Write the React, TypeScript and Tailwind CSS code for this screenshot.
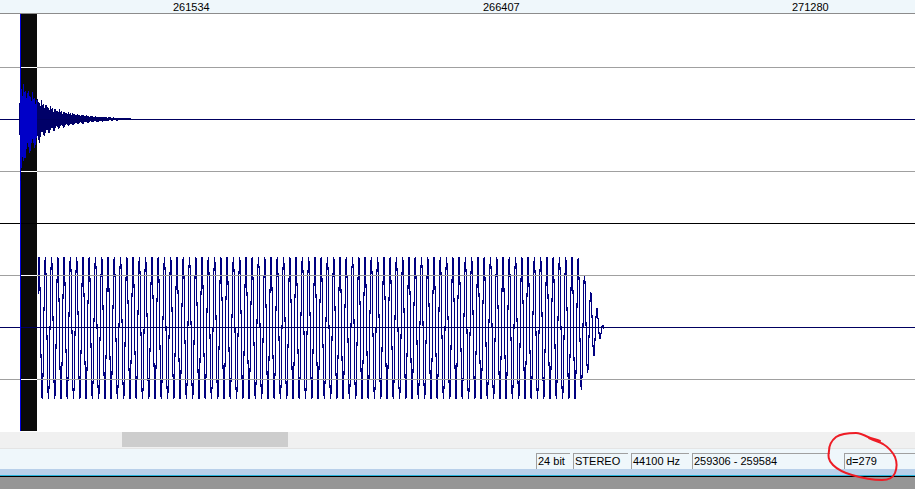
const P = 6.27;

function buildLower() {
  let d = "";
  const y = (x: number) => {
    const env = x < 578 ? 1 : Math.max(0, (604 - x) / 26);
    return 327.5 - 70.5 * env * Math.cos((2 * Math.PI * (x - 39)) / P);
  };
  for (let x = 38; x < 604; x++) {
    let top = Infinity;
    let bot = -Infinity;
    for (let t = -0.05; t <= 1.05; t += 0.05) {
      const v = y(x + t);
      top = Math.min(top, v);
      bot = Math.max(bot, v);
    }
    d += `M${x + 0.5} ${Math.round(top)}V${Math.round(bot) + 1}`;
  }
  return d;
}

function buildUpper(from: number, to: number) {
  let d = "";
  for (let x = from; x < to; x++) {
    const boost = 1 + 0.22 * Math.min(1, Math.max(0, (60 - x) / 30));
    const base = 31 * Math.exp(-(x - 22) / 32) * boost;
    const n = 0.78 + 0.22 * Math.sin(x * 2.1) * Math.cos(x * 0.7);
    const n2 = 0.82 + 0.18 * Math.sin(x * 1.3 + 1);
    const top = Math.max(1, Math.round(base * n));
    const edge = x < 24 ? 1.55 : x < 40 ? 1.15 : 1;
    const bot = Math.max(1, Math.round(base * n2 * edge));
    d += `M${x + 0.5} ${119 - top}V${119 + bot}`;
  }
  return d;
}

const lower = buildLower();
const upperBlue = buildUpper(20, 37);
const upperNavy = buildUpper(37, 131);

const grid = [
  { y: 67, c: "#a0a0a0", s: "#ffffff" },
  { y: 119, c: "#000060", s: "#0000c8" },
  { y: 171, c: "#a0a0a0", s: "#ffffff" },
  { y: 223, c: "#000000", s: "#000000" },
  { y: 275, c: "#a0a0a0", s: "#ffffff" },
  { y: 327, c: "#000060", s: "#000060" },
  { y: 379, c: "#a0a0a0", s: "#ffffff" },
];

function Cell({ className, children }: { className: string; children: React.ReactNode }) {
  return (
    <div
      className={`h-4 border-t border-l border-t-[#a0a0a0] border-l-[#a0a0a0] pl-[1px] leading-[15px] whitespace-nowrap ${className}`}
    >
      {children}
    </div>
  );
}

export default function App() {
  return (
    <div className="relative h-[489px] w-[915px] overflow-hidden bg-white text-[11px] text-black font-['Liberation_Sans',sans-serif]">
      {/* ruler */}
      <div className="flex h-[13px] items-center bg-[#eff7fb] pl-[173px] pt-px leading-[12px]">
        <span className="w-[310px]">261534</span>
        <span className="w-[309px]">266407</span>
        <span>271280</span>
      </div>
      <div className="h-px bg-[#8c8c8c]" />

      {/* wave */}
      <svg width="915" height="417" viewBox="0 14 915 417" className="block" shapeRendering="crispEdges">
        <rect x="0" y="14" width="915" height="417" fill="#fff" />
        <rect x="21" y="14" width="16" height="417" fill="#0a0a0a" />
        <rect x="20" y="14" width="1" height="417" fill="#0000e0" />
        <path d={lower} stroke="#000080" strokeWidth="1" fill="none" />
        <path d="M19.5 103V135" stroke="#000080" fill="none" />
        <path d={upperBlue} stroke="#0000c8" fill="none" />
        <path d={upperNavy} stroke="#000068" fill="none" />
        {grid.map((g) => (
          <g key={g.y}>
            <rect x="0" y={g.y} width="20" height="1" fill={g.c} />
            <rect x="21" y={g.y} width="16" height="1" fill={g.s} />
            <rect x="37" y={g.y} width="878" height="1" fill={g.c} />
          </g>
        ))}
      </svg>

      {/* scrollbar */}
      <div className="mt-px h-4 bg-[#f0f0f0] pl-[122px]">
        <div className="h-[15px] w-[166px] bg-[#cdcdcd]" />
      </div>
      <div className="h-px bg-[#e4e4e4]" />

      {/* status */}
      <div className="flex h-5 items-center bg-[#eff7fb] pl-[536px] pt-[3px]">
        <Cell className="w-[34px]">24 bit</Cell>
        <Cell className="ml-[3px] w-[55px]">STEREO</Cell>
        <Cell className="ml-[3px] w-[58px]">44100 Hz</Cell>
        <Cell className="ml-[3px] w-[138px]">259306 - 259584</Cell>
        <Cell className="ml-[14px] w-[71px]">d=279</Cell>
      </div>
      <div className="h-[6px] bg-[#b8d0ea]" />
      <div className="h-px bg-[#28b4dc]" />
      <div className="h-px bg-black" />
      <div className="h-3 bg-[#969696]" />

      {/* hand-drawn annotation */}
      <svg width="915" height="489" className="pointer-events-none absolute top-0 left-0">
        <path
          d="M880 441C876 439 872 439 868 437C862 434 860 433 856 433C850 433 842 433 836 437C831 441 829 446 829 451C828 456 828 460 833 465C838 470 845 473 852 475C862 478 872 480 882 480C888 480 893 478 895 473C897 468 897 462 895 457C892 451 888 447 883 444C879 442 875 441 869 438"
          stroke="#ee1c25"
          strokeWidth="2"
          fill="none"
          strokeLinecap="round"
        />
      </svg>
    </div>
  );
}
